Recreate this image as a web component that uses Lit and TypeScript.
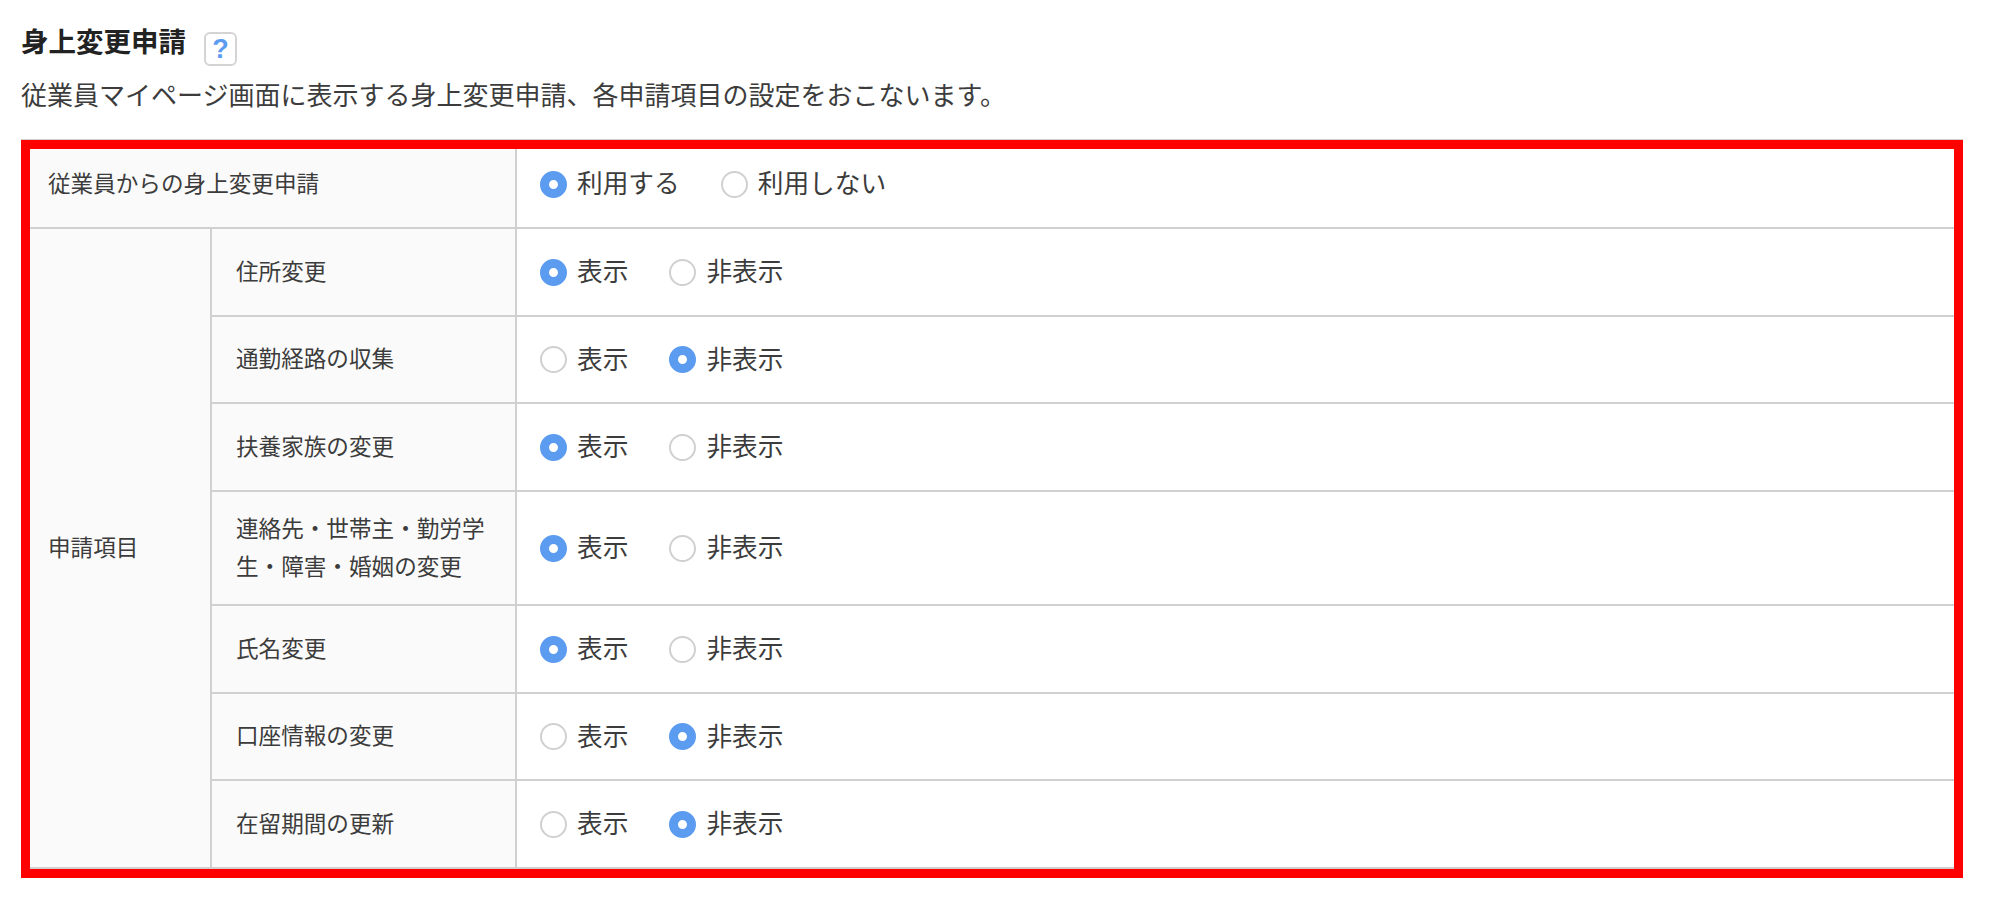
import { LitElement, html, css } from 'lit';
import { customElement } from 'lit/decorators.js';

interface Item {
  label: string;
  visible: boolean;
  height: number;
}

const items: Item[] = [
  { label: '住所変更', visible: true, height: 88 },
  { label: '通勤経路の収集', visible: false, height: 87 },
  { label: '扶養家族の変更', visible: true, height: 88 },
  { label: '連絡先・世帯主・勤労学生・障害・婚姻の変更', visible: true, height: 114 },
  { label: '氏名変更', visible: true, height: 88 },
  { label: '口座情報の変更', visible: false, height: 87 },
  { label: '在留期間の更新', visible: false, height: 88 },
];

@customElement('app-root')
export class AppRoot extends LitElement {
  static styles = css`
    :host {
      display: block;
      background: #fff;
      color: #3c3c3c;
      font-family: 'Noto Sans CJK JP', 'Noto Sans', sans-serif;
      min-height: 897px;
      padding: 20px 37px 0 21px;
      box-sizing: border-box;
    }
    .head {
      display: flex;
      align-items: flex-start;
      gap: 18px;
      height: 51px;
    }
    h1 {
      margin: 0;
      font-size: 27.5px;
      line-height: 40px;
      font-weight: 700;
      color: #222;
    }
    .help {
      width: 33px;
      height: 34px;
      margin-top: 12px;
      box-sizing: border-box;
      border: 2px solid #d4d4d4;
      border-radius: 6px;
      display: flex;
      align-items: center;
      justify-content: center;
      color: #5b9bf0;
      font-family: 'Liberation Sans', sans-serif;
      font-size: 27px;
      font-weight: 700;
    }
    .desc {
      margin: 0;
      font-size: 26px;
      line-height: 46px;
      height: 68px;
    }
    .wrap {
      position: relative;
    }
    /* red annotation box drawn over the table */
    .frame {
      position: absolute;
      top: 1px;
      left: 0;
      right: 0;
      bottom: -9px;
      border: 9px solid #f00;
      pointer-events: none;
    }
    table {
      width: 100%;
      border-collapse: collapse;
      table-layout: fixed;
    }
    col.c1 { width: 189px; }
    col.c2 { width: 305px; }
    tr.top { height: 88px; }
    th {
      background: #fafafa;
      font-size: 22.6px;
      font-weight: 400;
      line-height: 38px;
      text-align: left;
      padding: 0 0 3px 24px;
      border: 2px solid #d0d0d0;
    }
    th.first { padding-left: 25px; }
    td {
      padding: 0 0 0 23px;
      border: 2px solid #d0d0d0;
    }
    .radios { display: flex; gap: 41px; }
    .opt {
      display: flex;
      align-items: center;
      gap: 10px;
      font-size: 25.7px;
      line-height: 38px;
    }
    .opt span:last-child {
      margin-bottom: 4px;
    }
    .dot {
      width: 27px;
      height: 27px;
      box-sizing: border-box;
      border-radius: 50%;
      border: 2px solid #d0d0d0;
      background: #fff;
      flex: none;
    }
    .dot.on {
      border: 9px solid #5b9bf0;
    }
  `;

  private radio(label: string, on: boolean) {
    return html`<label class="opt"><span class="dot ${on ? 'on' : ''}"></span><span>${label}</span></label>`;
  }

  private radios(first: string, second: string, firstOn: boolean) {
    return html`<td><div class="radios">${this.radio(first, firstOn)}${this.radio(second, !firstOn)}</div></td>`;
  }

  render() {
    return html`
      <div class="head">
        <h1>身上変更申請</h1>
        <span class="help">?</span>
      </div>
      <p class="desc">従業員マイページ画面に表示する身上変更申請、各申請項目の設定をおこないます。</p>
      <div class="wrap">
        <table>
          <colgroup><col class="c1" /><col class="c2" /><col /></colgroup>
          <tr class="top">
            <th class="first" colspan="2">従業員からの身上変更申請</th>
            ${this.radios('利用する', '利用しない', true)}
          </tr>
          ${items.map(
            (item, i) => html`
              <tr style="height: ${item.height}px">
                ${i === 0 ? html`<th class="first" rowspan=${items.length}>申請項目</th>` : ''}
                <th>${item.label}</th>
                ${this.radios('表示', '非表示', item.visible)}
              </tr>
            `,
          )}
        </table>
        <div class="frame"></div>
      </div>
    `;
  }
}
